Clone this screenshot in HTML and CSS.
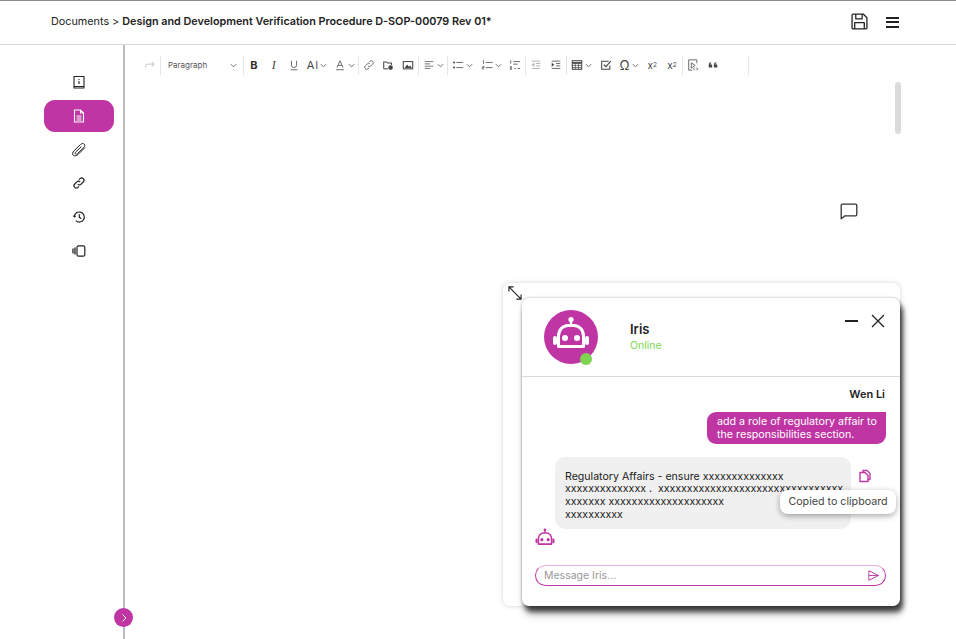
FILE: index.html
```html
<!DOCTYPE html>
<html lang="en">
<head>
<meta charset="utf-8">
<title>Design and Development Verification Procedure</title>
<link rel="stylesheet" href="styles.css">
</head>
<body>
<svg class="defs" width="0" height="0" aria-hidden="true">
  <symbol id="chev" viewBox="0 0 8 8"><path d="M1 2.500 4 5.500 7 2.500" fill="none" stroke="currentColor" stroke-width="1.100"/></symbol>
  <symbol id="robot" viewBox="0 0 54 54">
    <circle cx="27" cy="9.500" r="2.600" fill="currentColor"/>
    <path d="M27 11v4" stroke="currentColor" stroke-width="2.400"/>
    <path d="M14.500 36.500V26a9.500 10.500 0 0 1 9.500-10.500h6A9.500 10.500 0 0 1 39.500 26v10.500z" fill="none" stroke="currentColor" stroke-width="3" stroke-linejoin="round"/>
    <path d="M11 28v5M43 28v5" stroke="currentColor" stroke-width="4" stroke-linecap="round"/>
    <circle cx="21" cy="28" r="3" fill="currentColor"/>
    <circle cx="33" cy="28" r="3" fill="currentColor"/>
  </symbol>
</svg>

<header class="topbar">
  <p class="crumbs">Documents &gt; <strong>Design and Development Verification Procedure D-SOP-00079 Rev 01*</strong></p>
  <div class="top-actions">
    <svg class="ico-save" viewBox="0 0 16 16"><path d="M1 2a1 1 0 0 1 1-1h9.500L15 4.500V14a1 1 0 0 1-1 1H2a1 1 0 0 1-1-1z M4.500 1v4.500h6V1 M3.500 15V9h9v6" fill="none" stroke="#222" stroke-width="1.200" stroke-linejoin="round"/></svg>
    <div class="burger"><span></span><span></span><span></span></div>
  </div>
</header>

<div class="main">
  <nav class="sidebar">
    <a class="side-item"><svg viewBox="0 0 14 14"><path d="M2 1.500h10v10H2zM2 11.500v1.500h10v-1.500" fill="none" stroke="#222" stroke-width="1.100"/><path d="M7 4v.9M7 6v3" stroke="#222" stroke-width="1.100"/></svg></a>
    <a class="side-item active"><svg viewBox="0 0 14 14"><path d="M2.500 1h6l3 3v9h-9zM8.500 1v3h3M4.500 7h5M4.500 9h5M4.500 11h5" fill="none" stroke="#fff" stroke-width="1.100"/></svg></a>
    <a class="side-item"><svg viewBox="0 0 14 14"><path d="M13 4.500 6 11.500C4.500 13 2.300 13.300 1.200 12.200S.5 9.300 2 7.800L8.500 1.500C9.700.4 11.300.2 12.200 1.100S12.900 3.400 11.800 4.500L5.500 10.600C4.800 11.300 4 11.400 3.500 10.900S3 9.700 3.700 9L9.500 3.500" fill="none" stroke="#222" stroke-width="1"/></svg></a>
    <a class="side-item"><svg viewBox="0 0 14 14"><path d="M5.800 8.200a2.300 2.300 0 0 0 3.300 0l2.200-2.200A2.300 2.300 0 0 0 8 2.700L7 3.700M8.200 5.800a2.300 2.300 0 0 0-3.300 0L2.700 8A2.300 2.300 0 0 0 6 11.300l1-1" fill="none" stroke="#222" stroke-width="1.200"/></svg></a>
    <a class="side-item"><svg viewBox="0 0 14 14"><path d="M2.300 7a5 5 0 1 1 1.500 3.600" fill="none" stroke="#222" stroke-width="1.200"/><path d="M.6 5.600 2.300 7.800 4.400 5.900z" fill="#222"/><path d="M7.300 4.300v3l2 1.200" fill="none" stroke="#222" stroke-width="1.200"/></svg></a>
    <a class="side-item"><svg viewBox="0 0 14 14"><path d="M1 4.500v5M3 3.500v7" stroke="#222" stroke-width="1.300" fill="none"/><rect x="5" y="1.800" width="7.800" height="10.400" rx="1.500" fill="none" stroke="#222" stroke-width="1.200"/></svg></a>
    <button class="collapse"><svg viewBox="0 0 10 10"><path d="M3.500 1.500 7 5 3.500 8.500" fill="none" stroke="#fff" stroke-width="1"/></svg></button>
  </nav>

  <section class="editor">
    <div class="toolbar">
      <span class="tb w-redo"><svg viewBox="0 0 14 14"><path d="M2 10V8a2 2 0 0 1 2-2h8M9 3.500 12 6 9 8.500" fill="none" stroke="#bbb" stroke-width="1"/></svg></span>
      <i class="sep"></i>
      <span class="select">Paragraph<svg class="chev"><use href="#chev"/></svg></span>
      <i class="sep"></i>
      <span class="tb w20 glyph b">B</span>
      <span class="tb w19 glyph it">I</span>
      <span class="tb w20"><svg viewBox="0 0 14 14"><path d="M4 2v5a3 3 0 0 0 6 0V2M3 12.500h8" fill="none" stroke="#555" stroke-width="1"/></svg></span>
      <span class="tb w27 glyph">A<small class="cur">I</small><svg class="chev"><use href="#chev"/></svg></span>
      <span class="tb w27"><svg viewBox="0 0 14 14"><path d="M3.500 10 7 2l3.500 8M4.700 7.500h4.600M2.500 12.500h9" fill="none" stroke="#555" stroke-width="1"/></svg><svg class="chev"><use href="#chev"/></svg></span>
      <i class="sep"></i>
      <span class="tb w20"><svg viewBox="0 0 14 14"><path d="M5.800 8.200a2.300 2.300 0 0 0 3.300 0l2.200-2.200A2.300 2.300 0 0 0 8 2.700L7 3.700M8.200 5.800a2.300 2.300 0 0 0-3.300 0L2.700 8A2.300 2.300 0 0 0 6 11.300l1-1" fill="none" stroke="#555" stroke-width="1"/></svg></span>
      <span class="tb w19"><svg viewBox="0 0 14 14"><path d="M2 11.500v-8h3.500l1 1.200H11V7" fill="none" stroke="#444" stroke-width="1.200"/><path d="M2 11.500h5" stroke="#444" stroke-width="1.200"/><circle cx="10" cy="10" r="2.700" fill="#444"/></svg></span>
      <span class="tb w20"><svg viewBox="0 0 14 14"><rect x="1.500" y="3" width="11" height="8.500" fill="none" stroke="#444" stroke-width="1.200"/><path d="M3 10.500 6 6.500 8 9l1.500-1.500L11.500 10.500z" fill="#444"/></svg></span>
      <i class="sep"></i>
      <span class="tb w28"><svg viewBox="0 0 14 14"><path d="M2 3h10M2 5.700h6.500M2 8.400h10M2 11h6.500" stroke="#666" stroke-width="1" fill="none"/></svg><svg class="chev"><use href="#chev"/></svg></span>
      <i class="sep"></i>
      <span class="tb w29"><svg viewBox="0 0 14 14"><path d="M5 4h8M5 10h8" stroke="#555" stroke-width="1"/><circle cx="2.500" cy="4" r="1.200" fill="#444"/><circle cx="2.500" cy="10" r="1.200" fill="#444"/></svg><svg class="chev"><use href="#chev"/></svg></span>
      <span class="tb w28"><svg viewBox="0 0 14 14"><path d="M5.500 4h8M5.500 10h8" stroke="#555" stroke-width="1"/><path d="M2 2.500l1-.7v4M1.500 8.500h2v1.500h-2v1.700h2" fill="none" stroke="#444" stroke-width=".8"/></svg><svg class="chev"><use href="#chev"/></svg></span>
      <span class="tb w20"><svg viewBox="0 0 14 14"><path d="M5 3h8M5 6h5M6 11h2M10 11h3" stroke="#555" stroke-width="1"/><path d="M2 1.500v4M1 9h2v1.500H1.500V12h2" fill="none" stroke="#444" stroke-width=".9"/></svg></span>
      <i class="sep"></i>
      <span class="tb w20"><svg viewBox="0 0 14 14"><path d="M2 2.500h10M7 5.300h5M7 8h5M2 11h10" stroke="#aaa" stroke-width="1"/><path d="M5 4.500 2 6.700 5 9z" fill="#aaa"/></svg></span>
      <span class="tb w20"><svg viewBox="0 0 14 14"><path d="M2 2.500h10M7 5.300h5M7 8h5M2 11h10" stroke="#555" stroke-width="1"/><path d="M2 4.500 5 6.700 2 9z" fill="#444"/></svg></span>
      <i class="sep"></i>
      <span class="tb w29"><svg viewBox="0 0 14 14"><rect x="1.500" y="2" width="11" height="10" fill="none" stroke="#444" stroke-width="1.200"/><path d="M1.500 4.600h11" stroke="#444" stroke-width="2"/><path d="M1.500 7.500h11M1.500 10h11M5 4v8M8.800 4v8" stroke="#444" stroke-width=".8"/></svg><svg class="chev"><use href="#chev"/></svg></span>
      <span class="tb w19"><svg viewBox="0 0 14 14"><path d="M11.500 7.500V12h-9.500V2.500h8" fill="none" stroke="#444" stroke-width="1.200"/><path d="M4.500 6.500 7 9l5.500-6.500" fill="none" stroke="#444" stroke-width="1.300"/></svg></span>
      <span class="tb w27 glyph omega">Ω<svg class="chev"><use href="#chev"/></svg></span>
      <span class="tb w19 glyph sc">x<sub>2</sub></span>
      <span class="tb w20 glyph sc">x<sup>2</sup></span>
      <i class="sep"></i>
      <span class="tb w19"><svg viewBox="0 0 14 14"><path d="M11.500 5V1H2v12h4" fill="none" stroke="#555" stroke-width="1"/><path d="M5 4.500 9.500 7.500 5 10.500z" fill="none" stroke="#555" stroke-width="1"/><path d="M9 10 7.500 11.500 9 13M11 10l1.500 1.500L11 13" fill="none" stroke="#444" stroke-width="1"/></svg></span>
      <span class="tb w20"><svg viewBox="0 0 14 14"><path d="M2 10V7c0-1.800 1-3 2.800-3.500v1.500C4 5.400 3.800 6 3.800 6.500H6V10zM8 10V7c0-1.800 1-3 2.800-3.500v1.500c-.8.400-1 1-1 1.500H12V10z" fill="#444"/></svg></span>
      <span class="tb-fill"></span>
      <i class="sep"></i>
    </div>

    <div class="scrollbar"></div>
    <svg class="comment" viewBox="0 0 18 17"><path d="M2.500 1.200h13a1.300 1.300 0 0 1 1.300 1.300v9a1.300 1.300 0 0 1-1.300 1.300H5L1.200 15.800V2.500a1.300 1.300 0 0 1 1.300-1.300z" fill="none" stroke="#333" stroke-width="1.300" stroke-linejoin="round"/></svg>

    <div class="chat-back">
      <svg class="expand" viewBox="0 0 15 15"><path d="M1 1l13 13M1 6V1h5M14 9v5H9" fill="none" stroke="#222" stroke-width="1.200"/></svg>
    </div>
    <div class="chat">
      <div class="chat-head">
        <div class="avatar">
          <svg class="avatar-robot"><use href="#robot"/></svg>
          <span class="dot"></span>
        </div>
        <div class="who">
          <div class="name">Iris</div>
          <div class="status">Online</div>
        </div>
        <div class="win-btns">
          <span class="min"></span>
          <svg class="close" viewBox="0 0 14 14"><path d="M1 1l12 12M13 1 1 13" stroke="#222" stroke-width="1.300"/></svg>
        </div>
      </div>
      <div class="chat-body">
        <div class="sender">Wen Li</div>
        <div class="msg-user">add a role of regulatory affair to<br>the responsibilities section.</div>
        <div class="bot-row">
          <svg class="bot-icon" viewBox="8 6 38 34"><use href="#robot" width="54" height="54"/></svg>
          <div class="msg-bot">Regulatory Affairs - ensure xxxxxxxxxxxxxx<br>xxxxxxxxxxxxxx .&nbsp; xxxxxxxxxxxxxxxxxxxxxxxxxxxxxxxx<br>xxxxxxx xxxxxxxxxxxxxxxxxxxx<br>xxxxxxxxxx</div>
          <svg class="copy" viewBox="0 0 14 14"><path d="M5 3V1.500h4l3 3V10.500h-2M2 3.500h5l3 3v6H2z" fill="none" stroke="#c035a5" stroke-width="1.400" stroke-linejoin="round"/></svg>
          <div class="tooltip">Copied to clipboard</div>
        </div>
        <div class="input">
          <span>Message Iris...</span>
          <svg viewBox="0 0 14 14"><path d="M2 1.800 12.500 7 2 12.200zM2 7h10.500" fill="none" stroke="#c035a5" stroke-width="1" stroke-linejoin="round"/></svg>
        </div>
      </div>
    </div>
  </section>
</div>
</body>
</html>
```

FILE: styles.css
```css
* { box-sizing: border-box; }
html, body { height: 100%; }
body {
  margin: 0;
  height: 639px;
  overflow: hidden;
  font-family: Inter, "Liberation Sans", sans-serif;
  color: #222;
  background: #fff;
  display: flex;
  flex-direction: column;
}
.defs { position: absolute; }

.topbar {
  height: 45px;
  flex: none;
  border-top: 1px solid #8c8c8c;
  border-bottom: 1px solid #d9d9d9;
  display: flex;
  align-items: center;
  justify-content: space-between;
  padding: 0 57px 3px 51px;
}
.crumbs { margin: 0; font-size: 10.800px; color: #222; }
.crumbs strong { font-weight: 600; }
.top-actions { display: flex; align-items: center; gap: 18px; }
.ico-save { width: 17px; height: 17px; display: block; }
.burger { display: flex; flex-direction: column; gap: 2.500px; width: 13px; padding-top: 2px; }
.burger span { height: 2px; background: #222; display: block; }

.main { flex: 1; display: flex; min-height: 0; }

.sidebar {
  width: 125px;
  flex: none;
  border-right: 2px solid #bdbdbd;
  padding: 21px 9px 0 44px;
  position: relative;
  display: flex;
  flex-direction: column;
  gap: 1.750px;
}
.side-item {
  height: 32px;
  width: 70px;
  flex: none;
  border-radius: 11px;
  display: flex;
  align-items: center;
  justify-content: center;
}
.side-item svg { width: 14px; height: 14px; display: block; }
.side-item.active { background: #bf35a4; }
.collapse {
  position: absolute;
  right: -10px;
  top: 563px;
  width: 19px;
  height: 19px;
  border: 0;
  padding: 0;
  border-radius: 50%;
  background: #bf35a4;
  display: flex;
  align-items: center;
  justify-content: center;
}
.collapse svg { width: 10px; height: 10px; }

.editor { flex: 1; position: relative; padding: 11px 0 0 11px; }

.toolbar {
  display: flex;
  align-items: center;
  height: 19px;
  width: 613px;
  color: #555;
  padding-left: 4px;
}
.tb {
  display: flex;
  align-items: center;
  justify-content: center;
  height: 19px;
  padding-bottom: 1px;
  flex: none;
}
.tb svg { width: 12px; height: 12px; display: block; flex: none; }
.tb svg.chev, .select svg.chev { width: 7px; height: 7px; margin-left: 2px; color: #666; }
.w-redo { width: 20px; }
.w19 { width: 19.500px; }
.w20 { width: 20px; }
.w27 { width: 27px; }
.w28 { width: 28px; }
.w29 { width: 29px; }
.tb-fill { flex: 1; }
.sep { width: 1px; height: 19px; background: #e6e6e6; flex: none; display: block; }
.select {
  width: 82px;
  flex: none;
  display: flex;
  align-items: center;
  justify-content: space-between;
  padding: 0 6px 1px 7px;
  font-size: 8px;
  color: #555;
}
.glyph { font-size: 11px; color: #444; }
.glyph.b { font-weight: 700; color: #333; }
.glyph.it { font-family: "Liberation Serif", serif; font-style: italic; font-size: 12px; }
.cur { font-size: 11px; color: #555; margin-left: 1px; }
.glyph.omega { font-size: 13px; }
.glyph.sc { font-size: 10px; }
.glyph.sc sub, .glyph.sc sup { font-size: 6.500px; line-height: 0; }

.scrollbar {
  position: absolute;
  left: 770px;
  top: 37px;
  width: 6px;
  height: 52px;
  border-radius: 3px;
  background: #dcdcdc;
}
.comment { position: absolute; left: 715px; top: 158px; width: 18px; height: 17px; }

.chat-back {
  position: absolute;
  left: 378px;
  top: 238px;
  width: 397px;
  height: 323px;
  background: #fff;
  border-radius: 7px;
  box-shadow: 0 0 5px rgba(0, 0, 0, .18);
}
.expand { position: absolute; left: 5px; top: 3px; width: 14px; height: 14px; }

.chat {
  position: absolute;
  left: 397px;
  top: 253px;
  width: 378px;
  height: 308px;
  background: #fff;
  border-radius: 7px;
  box-shadow: 3px 6px 5px rgba(0, 0, 0, .68), 2px 9px 9px rgba(0, 0, 0, .2), 0 0 3px rgba(0, 0, 0, .3);
  display: flex;
  flex-direction: column;
}
.chat-head {
  height: 79px;
  flex: none;
  border-bottom: 1px solid #d9d9d9;
  display: flex;
  padding: 12px 15px 0 22px;
}
.avatar {
  width: 54px;
  height: 54px;
  border-radius: 50%;
  background: #bf35a4;
  color: #fff;
  position: relative;
  flex: none;
}
.avatar-robot { width: 54px; height: 54px; display: block; }
.dot {
  position: absolute;
  left: 36px;
  top: 43px;
  width: 12px;
  height: 12px;
  border-radius: 50%;
  background: #7ed350;
}
.who { margin-left: 32px; padding-top: 11px; flex: 1; }
.name { font-size: 13px; font-weight: 600; color: #222; line-height: 16px; }
.status { font-size: 10.500px; color: #7ed957; line-height: 14px; margin-top: 2px; }
.win-btns { display: flex; align-items: flex-start; gap: 13px; padding-top: 4px; }
.min { width: 13px; height: 2px; background: #222; margin-top: 6px; }
.close { width: 14px; height: 14px; display: block; }

.chat-body { flex: 1; padding: 10px 14px 0 13px; display: flex; flex-direction: column; }
.sender { font-size: 11px; font-weight: 600; text-align: right; line-height: 14px; margin-right: 1px; }
.msg-user {
  align-self: flex-end;
  margin-top: 11px;
  width: 179px;
  height: 32px;
  background: #bf35a4;
  color: #fff;
  border-radius: 9px 0 9px 9px;
  font-size: 10.700px;
  line-height: 13px;
  padding: 3px 0 0 10px;
}
.bot-row { position: relative; margin-top: 13px; display: flex; height: 108px; }
.bot-icon { width: 20px; height: 18px; color: #c035a5; align-self: flex-end; margin-bottom: 19px; flex: none; }
.msg-bot {
  width: 296px;
  height: 72px;
  background: #f0f0f0;
  border-radius: 10px;
  font-size: 10.600px;
  line-height: 12.700px;
  color: #222;
  padding: 13.500px 0 0 10px;
  overflow: hidden;
  white-space: nowrap;
}
.copy { width: 14px; height: 14px; margin: 12px 0 0 7px; flex: none; }
.tooltip {
  position: absolute;
  left: 245px;
  top: 33px;
  width: 116px;
  height: 24px;
  border-radius: 8px;
  background: #fff;
  box-shadow: 0 2px 6px rgba(0, 0, 0, .35);
  font-size: 10.700px;
  line-height: 24px;
  text-align: center;
  color: #444;
}
.input {
  height: 21px;
  border: 1px solid #c035a5;
  border-top-color: #e6b0db;
  border-radius: 11px;
  display: flex;
  align-items: center;
  justify-content: space-between;
  padding: 0 5px 0 8px;
  font-size: 10.500px;
  color: #999;
}
.input svg { width: 13px; height: 13px; display: block; }
```
